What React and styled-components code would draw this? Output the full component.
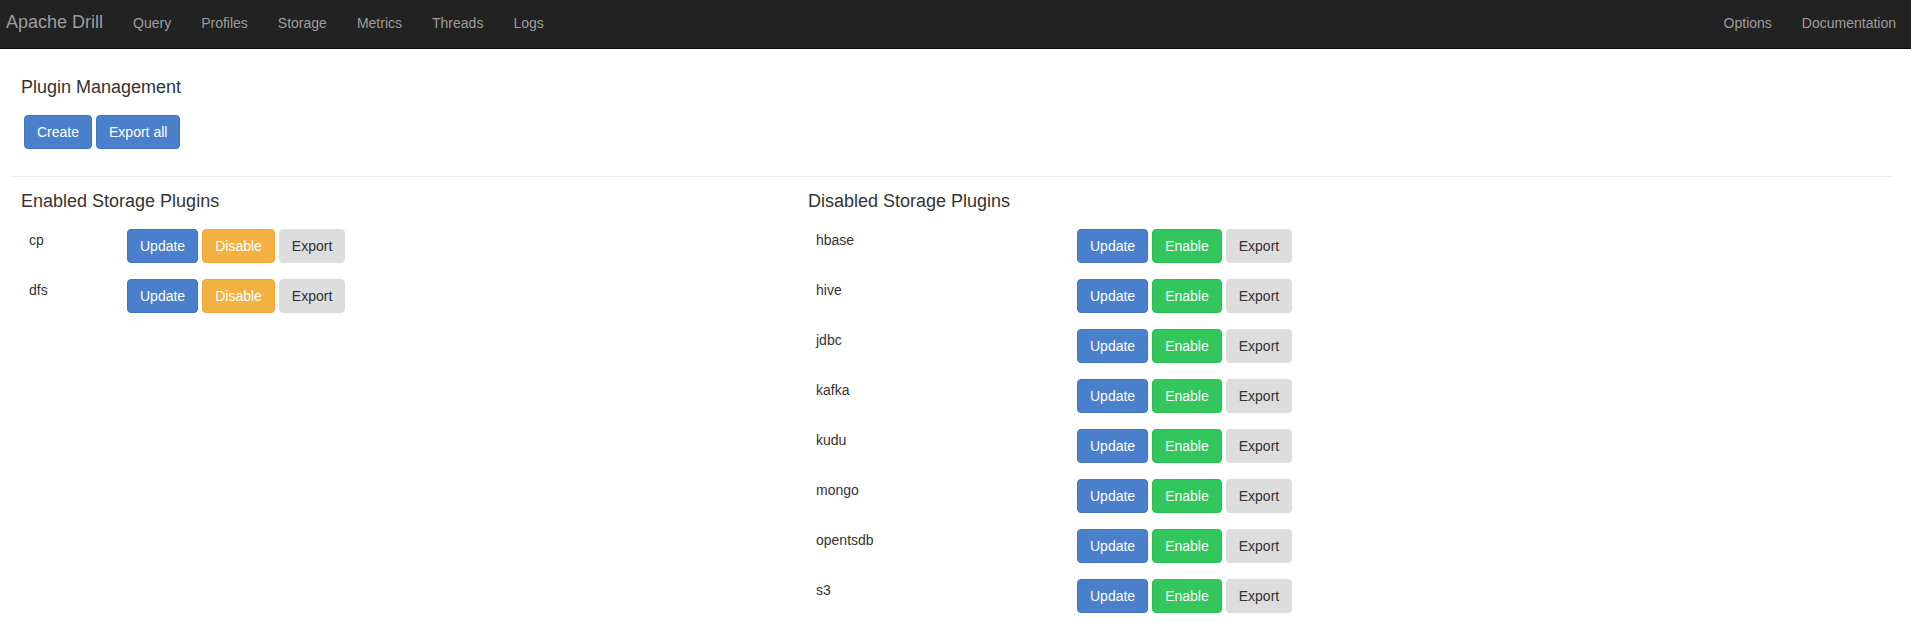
import React from "react";
import styled, { createGlobalStyle } from "styled-components";

const GlobalStyle = createGlobalStyle`
  html, body { margin: 0; padding: 0; background: #fff; }
  body {
    font-family: "Liberation Sans", Arial, Helvetica, sans-serif;
    font-size: 14px;
    line-height: 20px;
    color: #333;
  }
  * { box-sizing: border-box; }
`;

const Navbar = styled.nav`
  display: flex;
  align-items: center;
  height: 49px;
  background: #222;
  border-bottom: 1px solid #080808;
`;

const Brand = styled.a`
  font-size: 18px;
  line-height: 20px;
  color: #9d9d9d;
  padding: 0 15px 0 6px;
  text-decoration: none;
  margin-top: -4px;
`;

const NavList = styled.ul`
  display: flex;
  list-style: none;
  margin: 0;
  padding: 0;
  margin-left: ${(p) => (p.$right ? "auto" : "0")};
  margin-top: -3px;
`;

const NavLink = styled.a`
  display: block;
  padding: 0 15px;
  font-size: 14px;
  line-height: 20px;
  color: #9d9d9d;
  text-decoration: none;
`;

const Main = styled.main`
  padding: 0 19px 0 12px;
`;

const Heading = styled.h4`
  font-size: 18px;
  line-height: 20px;
  font-weight: 500;
  color: #333;
  margin: ${(p) => p.$margin};
  padding-left: ${(p) => (p.$inset ? "9px" : "0")};
`;

const ButtonRow = styled.div`
  display: flex;
  gap: 4px;
  margin: 18px 0 0 12px;
`;

const variants = {
  primary: { bg: "#4a7fcb", border: "#4276c2", color: "#fff" },
  warning: { bg: "#f2b142", border: "#eea733", color: "#fff" },
  success: { bg: "#33c65d", border: "#2bbf55", color: "#fff" },
  default: { bg: "#dddddd", border: "#dddddd", color: "#333" },
};

const Button = styled.button`
  font-family: inherit;
  font-size: 14px;
  line-height: 20px;
  padding: 6px 12px;
  border-radius: 4px;
  border: 1px solid ${(p) => variants[p.$variant].border};
  background: ${(p) => variants[p.$variant].bg};
  color: ${(p) => variants[p.$variant].color};
  cursor: pointer;
  white-space: nowrap;
`;

const Rule = styled.hr`
  border: 0;
  border-top: 1px solid #eee;
  margin: 27px 0 0 -1px;
  height: 0;
`;

const Columns = styled.div`
  display: grid;
  grid-template-columns: 787px 1fr;
  padding-left: 9px;
`;

const Column = styled.section``;

const PluginTable = styled.table`
  border-collapse: collapse;
  margin-left: -9px;
`;

const NameCell = styled.td`
  width: ${(p) => p.$width}px;
  padding: 9px 8px 7px 17px;
  vertical-align: top;
  color: #333;
`;

const ActionCell = styled.td`
  padding: 8px;
  vertical-align: top;
`;

const Actions = styled.div`
  display: flex;
  gap: 4px;
`;

const enabled = ["cp", "dfs"];
const disabled = ["hbase", "hive", "jdbc", "kafka", "kudu", "mongo", "opentsdb", "s3"];

function PluginList({ title, plugins, toggle, nameWidth }) {
  return (
    <Column>
      <Heading $margin="14px 0 10px 0">{title}</Heading>
      <PluginTable>
        <tbody>
          {plugins.map((name) => (
            <tr key={name}>
              <NameCell $width={nameWidth}>{name}</NameCell>
              <ActionCell>
                <Actions>
                  <Button $variant="primary">Update</Button>
                  <Button $variant={toggle === "Disable" ? "warning" : "success"}>{toggle}</Button>
                  <Button $variant="default">Export</Button>
                </Actions>
              </ActionCell>
            </tr>
          ))}
        </tbody>
      </PluginTable>
    </Column>
  );
}

export default function App() {
  return (
    <>
      <GlobalStyle />
      <Navbar>
        <Brand href="#">Apache Drill</Brand>
        <NavList>
          {["Query", "Profiles", "Storage", "Metrics", "Threads", "Logs"].map((l) => (
            <li key={l}><NavLink href="#">{l}</NavLink></li>
          ))}
        </NavList>
        <NavList $right>
          {["Options", "Documentation"].map((l) => (
            <li key={l}><NavLink href="#">{l}</NavLink></li>
          ))}
        </NavList>
      </Navbar>
      <Main>
        <Heading $margin="28px 0 0 0" $inset>Plugin Management</Heading>
        <ButtonRow>
          <Button $variant="primary">Create</Button>
          <Button $variant="primary">Export all</Button>
        </ButtonRow>
        <Rule />
        <Columns>
          <PluginList title="Enabled Storage Plugins" plugins={enabled} toggle="Disable" nameWidth={107} />
          <PluginList title="Disabled Storage Plugins" plugins={disabled} toggle="Enable" nameWidth={270} />
        </Columns>
      </Main>
    </>
  );
}
